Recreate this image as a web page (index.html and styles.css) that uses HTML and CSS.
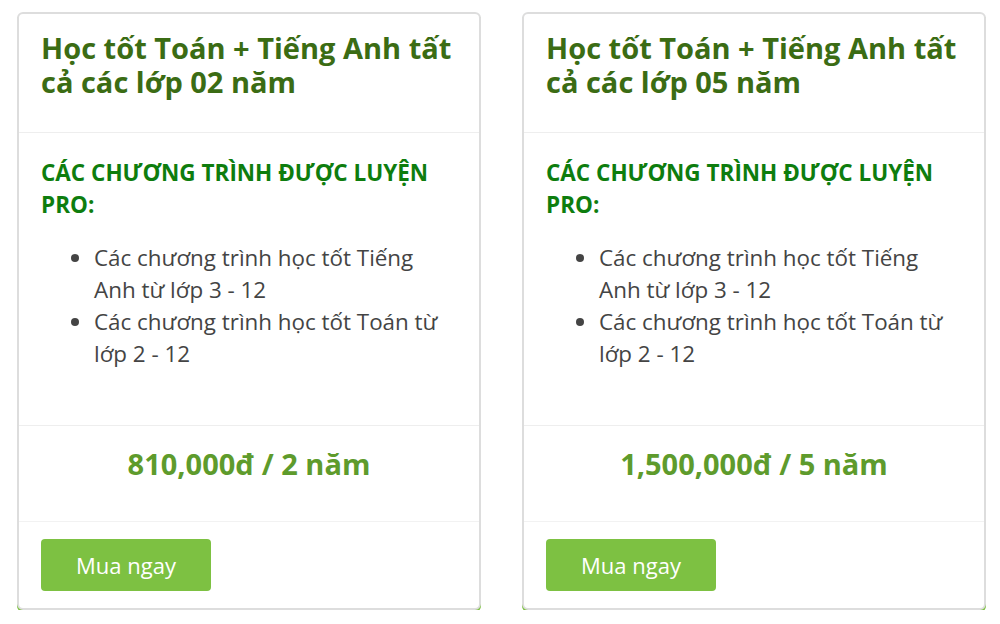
FILE: index.html
```html
<!DOCTYPE html>
<html lang="vi">
<head>
    <meta charset="UTF-8">
    <meta name="viewport" content="width=device-width, initial-scale=1.0">
    <title>Gói học</title>
    <link rel="stylesheet" href="styles.css">
</head>
<body>
    <div class="plans">
        <div class="plan">
            <div class="plan-head">
                <h2>Học tốt Toán + Tiếng Anh tất cả các lớp 02 năm</h2>
            </div>
            <div class="plan-body">
                <h3>CÁC CHƯƠNG TRÌNH ĐƯỢC LUYỆN PRO:</h3>
                <ul>
                    <li>Các chương trình học tốt Tiếng Anh từ lớp 3 - 12</li>
                    <li>Các chương trình học tốt Toán từ lớp 2 - 12</li>
                </ul>
            </div>
            <div class="plan-price">810,000đ / 2 năm</div>
            <div class="plan-foot">
                <button class="buy">Mua ngay</button>
            </div>
        </div>
        <div class="plan">
            <div class="plan-head">
                <h2>Học tốt Toán + Tiếng Anh tất cả các lớp 05 năm</h2>
            </div>
            <div class="plan-body">
                <h3>CÁC CHƯƠNG TRÌNH ĐƯỢC LUYỆN PRO:</h3>
                <ul>
                    <li>Các chương trình học tốt Tiếng Anh từ lớp 3 - 12</li>
                    <li>Các chương trình học tốt Toán từ lớp 2 - 12</li>
                </ul>
            </div>
            <div class="plan-price">1,500,000đ / 5 năm</div>
            <div class="plan-foot">
                <button class="buy">Mua ngay</button>
            </div>
        </div>
    </div>
</body>
</html>
```

FILE: styles.css
```css
body {
    font-family: "Open Sans", "Noto Sans", sans-serif;
    background-color: #fff;
    margin: 0;
}

.plans {
    display: grid;
    grid-template-columns: 464px 464px;
    column-gap: 41px;
    padding: 12px 0 0 17px;
}

.plan {
    border: 2px solid #ddd;
    border-radius: 6px;
    box-shadow: 0 2px 0 #7dc142;
    background: white;
}

.plan-head {
    height: 119px;
    padding: 17px 22px 0;
    border-bottom: 1px solid #eee;
    box-sizing: border-box;
}

.plan-head h2 {
    margin: 0;
    font-size: 29px;
    line-height: 34px;
    font-weight: 700;
    color: #3b6c14;
}

.plan-body {
    height: 293px;
    padding: 24px 30px 0 22px;
    border-bottom: 1px solid #eee;
    box-sizing: border-box;
}

.plan-body h3 {
    margin: 0;
    font-size: 22.5px;
    line-height: 32px;
    font-weight: 700;
    color: #0e7d0e;
}

.plan-body ul {
    margin: 21px 0 0;
    padding-left: 53px;
    font-size: 22.4px;
    line-height: 32px;
    color: #444;
}

.plan-price {
    height: 96px;
    padding-top: 19px;
    box-sizing: border-box;
    border-bottom: 1px solid #f2f2f2;
    text-align: center;
    font-size: 29px;
    line-height: 38px;
    font-weight: 700;
    color: #5e9b2c;
}

.plan-foot {
    padding: 17px 22px 17px;
}

.buy {
    width: 170px;
    height: 52px;
    border: none;
    border-radius: 4px;
    background-color: #7dc142;
    color: white;
    font-family: inherit;
    font-size: 22px;
}
```
